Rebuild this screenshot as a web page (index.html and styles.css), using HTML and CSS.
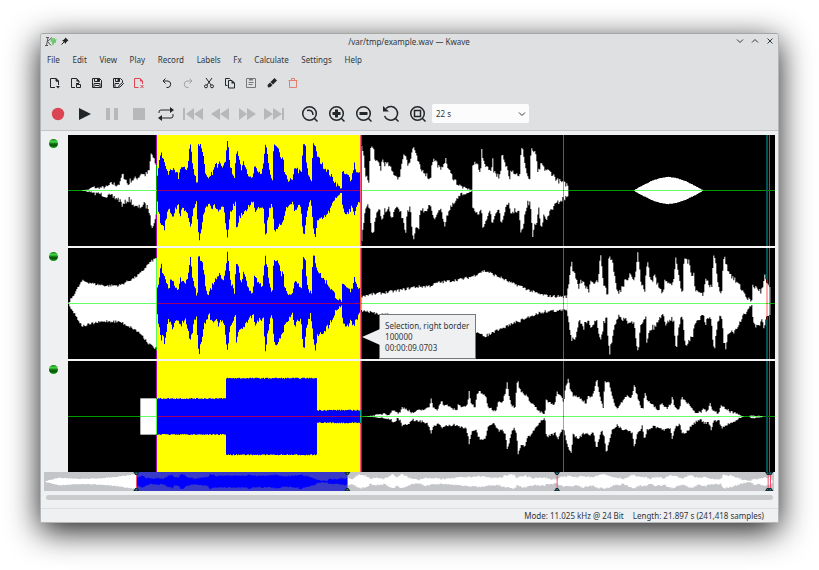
FILE: index.html
```html
<!DOCTYPE html>
<html lang="en">
<head>
    <meta charset="UTF-8">
    <meta name="viewport" content="width=device-width, initial-scale=1.0">
    <title>/var/tmp/example.wav — Kwave</title>
    <link rel="stylesheet" href="styles.css">
</head>
<body>

    <main class="window">
        <header class="header">
            <div class="titlebar">
                <div class="title-left">
                    <svg class="app-icon" width="13" height="11" viewBox="0 0 13 11">
                        <path d="M2 1.500h3M1 9.500h3M4 1.500L2.500 9.500M8 1.500L3.500 5.500L7 9.500" fill="none" stroke="#555" stroke-width="1"/>
                        <path d="M7 6l1-4 1 7 1-7 1 5 1-4" fill="none" stroke="#5fc95f" stroke-width="1"/>
                    </svg>
                    <svg width="8" height="8" viewBox="0 0 8 8">
                        <path d="M4.500 0.500L7.500 3.500L6.500 4L5 5.500V7L1 3h1.500L4 1.500z" fill="#222"/>
                        <path d="M3 5L0.500 7.500" stroke="#222"/>
                    </svg>
                </div>
                <h1 class="title">/var/tmp/example.wav — Kwave</h1>
                <div class="title-right">
                    <button class="win-btn" aria-label="Minimize"><svg width="8" height="8" viewBox="0 0 8 8"><path d="M1 2.500l3 3 3-3"/></svg></button>
                    <button class="win-btn" aria-label="Maximize"><svg width="8" height="8" viewBox="0 0 8 8"><path d="M1 5.500l3-3 3 3"/></svg></button>
                    <button class="win-btn" aria-label="Close"><svg width="8" height="8" viewBox="0 0 8 8"><path d="M1.500 1.500l5 5M6.500 1.500l-5 5"/></svg></button>
                </div>
            </div>

            <nav class="menubar">
                <button>File</button>
                <button>Edit</button>
                <button>View</button>
                <button>Play</button>
                <button>Record</button>
                <button>Labels</button>
                <button>Fx</button>
                <button>Calculate</button>
                <button>Settings</button>
                <button>Help</button>
            </nav>

            <div class="toolbar files">
                <button aria-label="New"><svg viewBox="0 0 12 12"><path d="M6 10.500H1.500v-9H7L9.500 4v4M7 1.500V4H9.500"/><path class="solid" d="M7 1v3.500H10zM7 9h4l-2 2.500z"/></svg></button>
                <button aria-label="Open"><svg viewBox="0 0 12 12"><path d="M5 10.500H1.500v-9H6.500L9 4v2M6.500 7.500h4v3h-4z"/><path class="solid" d="M6.500 1v3.500H9.500zM6 6h3v1.500H6z"/></svg></button>
                <button aria-label="Save"><svg viewBox="0 0 12 12"><path d="M1.500 1.500h7l2 2v7h-9zM3.500 1.500v3h5v-3M3 10.500v-4h6v4M4 8.500h4"/><path class="solid" d="M6 2h2v2H6z"/></svg></button>
                <button aria-label="Save As"><svg viewBox="0 0 12 12"><path d="M6 10.500H1.500v-9h7l2 2v2M3.500 1.500v3h4v-3M3 10.500v-4h4M6.500 10.500l.5-2 3.500-3 1 1-3.500 3.500z"/><path class="solid" d="M5.500 2h2v2h-2z"/></svg></button>
                <button class="red" aria-label="Close File"><svg viewBox="0 0 12 12"><path d="M5.500 10.500H1.500v-9H7L9.500 4v3M7.500 8l3 3M10.500 8l-3 3"/><path class="solid" d="M7 1v3.500H10z"/></svg></button>
                <span class="sep"></span>
                <button aria-label="Undo"><svg viewBox="0 0 12 12"><path d="M4.500 1.500L2 4l2.500 2.500M2 4h5a3.300 3.300 0 0 1 0 6.500H5.500"/></svg></button>
                <button class="dim" aria-label="Redo"><svg viewBox="0 0 12 12"><path d="M7.500 1.500L10 4 7.500 6.500M10 4H5a3.300 3.300 0 0 0 0 6.500h1.500"/></svg></button>
                <button aria-label="Cut"><svg viewBox="0 0 12 12"><path d="M3 1l5 7M9 1L4 8"/><circle cx="3" cy="9.300" r="1.500"/><circle cx="9" cy="9.300" r="1.500"/></svg></button>
                <button aria-label="Copy"><svg viewBox="0 0 12 12"><path d="M3.500 8.500h-2v-7h4l1 1M4.500 3.500h3.500l2.500 2.500v5h-6z"/><path class="solid" d="M7.500 3v3.500H11z"/></svg></button>
                <button class="mid" aria-label="Paste"><svg viewBox="0 0 12 12"><path d="M1.500 1.500h9v9h-9zM3.500 5.500h5M3.500 7.500h4"/><path class="solid" d="M4 1h4v2.500H4z"/></svg></button>
                <button aria-label="Erase"><svg viewBox="0 0 12 12"><path class="solid" d="M8.500 1L11 3.500 7 7.500 4.500 5zM4 5.500L6.500 8 4.500 10 2 10.500 1.500 8z"/></svg></button>
                <button class="orange" aria-label="Delete"><svg viewBox="0 0 12 12"><path d="M1.500 3.500h9M2.500 3.500v7h7v-7M4.500 3V1.500h3V3"/></svg></button>
            </div>

            <div class="toolbar player">
                <button class="rec" aria-label="Record"><svg viewBox="0 0 18 18"><circle class="solid" cx="9" cy="9" r="6.200"/></svg></button>
                <button aria-label="Play"><svg viewBox="0 0 18 18"><path class="solid" d="M3 3l12 6-12 6z"/></svg></button>
                <button class="off" aria-label="Pause"><svg viewBox="0 0 18 18"><path class="solid" d="M3 3h4v12H3zM11 3h4v12h-4z"/></svg></button>
                <button class="off" aria-label="Stop"><svg viewBox="0 0 18 18"><path class="solid" d="M3 3h12v12H3z"/></svg></button>
                <button aria-label="Loop"><svg viewBox="0 0 18 18"><path d="M2 8V7q0-2 2-2h10M16 9v2q0 2-2 2H3"/><path class="solid" d="M13 2l4 3-4 3zM5 10l-4 3 4 3z"/></svg></button>
                <button class="off" aria-label="Skip to Start"><svg viewBox="0 0 20 18"><path class="solid" d="M0 3h2v12H0zM11 3v12L3 9zM20 3v12l-9-6z"/></svg></button>
                <button class="off" aria-label="Rewind"><svg viewBox="0 0 18 18"><path class="solid" d="M9 3v12L0 9zM18 3v12L9 9z"/></svg></button>
                <button class="off" aria-label="Forward"><svg viewBox="0 0 18 18"><path class="solid" d="M1 3v12l8-6zM9 3v12l9-6z"/></svg></button>
                <button class="off" aria-label="Skip to End"><svg viewBox="0 0 20 18"><path class="solid" d="M0 3v12l9-6zM9 3v12l9-6zM18 3h2v12h-2z"/></svg></button>
                <span class="sep"></span>
                <button class="zoom" aria-label="Zoom to Selection"><svg viewBox="0 0 18 18"><circle cx="8.500" cy="8.500" r="6.800"/><path d="M13 13l3.500 3.500M6 5.500q6-1 6 4.500"/></svg></button>
                <button class="zoom" aria-label="Zoom In"><svg viewBox="0 0 18 18"><circle cx="8.500" cy="8.500" r="6.800"/><path d="M13 13l3.500 3.500"/><path class="bold" d="M4.500 8.500h8M8.500 4.500v8"/></svg></button>
                <button class="zoom" aria-label="Zoom Out"><svg viewBox="0 0 18 18"><circle cx="8.500" cy="8.500" r="6.800"/><path d="M13 13l3.500 3.500"/><path class="bold" d="M4.500 8.500h8"/></svg></button>
                <button class="zoom" aria-label="Zoom 1:1"><svg viewBox="0 0 18 18"><path d="M4 3.500A6.800 6.800 0 1 1 2.500 11M13 13l3.500 3.500"/><path class="solid" d="M1 1l6 5.500H1z"/></svg></button>
                <button class="zoom" aria-label="Zoom All"><svg viewBox="0 0 18 18"><circle cx="8.500" cy="8.500" r="6.800"/><path d="M13 13l3.500 3.500M5.500 5.500h6v6h-6z"/></svg></button>
                <div class="combo">
                    <select aria-label="Zoom factor">
                        <option>22 s</option>
                    </select>
                    <svg class="chevron" width="8" height="8" viewBox="0 0 8 8"><path d="M1 2.500l3 3 3-3"/></svg>
                </div>
            </div>
        </header>

        <section class="signal">
            <div class="channels">
                <div class="channel"><button class="led" aria-label="Channel 0"></button></div>
                <div class="channel"><button class="led" aria-label="Channel 1"></button></div>
                <div class="channel"><button class="led" aria-label="Channel 2"></button></div>
            </div>
            <div class="tracks">
                <svg class="track" id="track0" viewBox="0 0 2121 333" preserveAspectRatio="none"></svg>
                <svg class="track" id="track1" viewBox="0 0 2121 333" preserveAspectRatio="none"></svg>
                <svg class="track" id="track2" viewBox="0 0 2121 333" preserveAspectRatio="none"></svg>
                <div class="tip">
                    <p>Selection, right border</p>
                    <p>100000</p>
                    <p>00:00:09.0703</p>
                </div>
            </div>
        </section>

        <svg class="overview" id="overview" viewBox="0 0 2190 57" preserveAspectRatio="none"></svg>
        <div class="scrollbar"></div>

        <footer class="status">
            <span>Mode: 11.025 kHz @ 24 Bit</span>
            <span>Length: 21.897 s (241,418 samples)</span>
        </footer>
    </main>

    <script src="script.js"></script>
</body>
</html>
```
FILE: styles.css
```css
body {
    margin: 0;
    padding: 33px 40px 48px;
    background: #fff;
    color: #31363b;
    font-family: "Noto Sans", sans-serif;
    font-size: 8px;
    line-height: 11px;
}
button {
    border: none;
    padding: 0;
    background: none;
    color: inherit;
    font: inherit;
}
svg {
    display: block;
}
.window {
    background: #eff0f1;
    border: 1px solid #b4b6b8;
    border-top-color: #a4a8a6;
    border-radius: 3px 3px 0 0;
    box-shadow: 0 8px 32px rgba(0, 0, 0, 0.9);
}
.header {
    background: #dee0e2;
    border-bottom: 1px solid #c3c5c7;
    border-radius: 2px 2px 0 0;
}

/* title bar and menu */
.titlebar {
    display: flex;
    align-items: center;
    height: 14px;
    padding: 0 4px 2px 3px;
}
.title-left,
.title-right {
    display: flex;
    flex: 1;
    align-items: center;
    gap: 4px;
}
.title-right {
    justify-content: flex-end;
    gap: 7px;
}
.title {
    margin: 0;
    font-size: 8px;
    font-weight: normal;
}
.win-btn svg,
.chevron {
    fill: none;
    stroke: #31363b;
}
.menubar {
    display: flex;
    align-items: center;
    justify-content: space-between;
    max-width: 327px;
    height: 18px;
    padding-bottom: 2px;
}
.menubar button {
    padding: 0 6px;
}

/* toolbars */
.toolbar {
    display: flex;
    align-items: center;
    padding-left: 3px;
}
.toolbar button {
    display: flex;
    justify-content: center;
    color: #232629;
}
.toolbar svg {
    fill: none;
    stroke: currentColor;
}
.toolbar .solid {
    fill: currentColor;
    stroke: none;
}
.files {
    height: 25px;
}
.files button {
    width: 21px;
}
.files button svg {
    width: 12px;
    height: 12px;
}
.files .sep {
    width: 7px;
}
.player {
    height: 33px;
    padding-top: 2px;
}
.player button {
    width: 27px;
}
.player button svg {
    height: 18px;
}
.player .sep {
    width: 9px;
}
.toolbar .red {
    color: #da4453;
}
.toolbar .rec {
    color: #da4453;
}
.toolbar .orange {
    color: #e58070;
}
.toolbar .dim {
    color: #a0a2a4;
}
.toolbar .mid {
    color: #76787a;
}
.toolbar .off {
    color: #b6b8ba;
}
.zoom svg {
    stroke-width: 1.5;
}
.zoom .bold {
    stroke-width: 3;
}
.combo {
    display: flex;
    align-items: center;
    position: relative;
    width: 97px;
    height: 19px;
    margin-left: 1px;
}
.combo select {
    width: 100%;
    height: 100%;
    padding: 0 4px;
    border: none;
    border-radius: 2px;
    appearance: none;
    background: #fcfcfc;
    color: #31363b;
    font: inherit;
}
.toolbar .chevron {
    position: absolute;
    right: 3px;
    pointer-events: none;
}

/* signal view */
.signal {
    display: flex;
    padding: 4px 3px 0 0;
}
.channels,
.tracks {
    display: flex;
    flex-direction: column;
    gap: 2px;
}
.channels {
    width: 27px;
}
.channel {
    display: flex;
    justify-content: center;
    height: 111px;
    padding: 4px 3px 0 0;
    box-sizing: border-box;
}
.led {
    width: 9px;
    height: 9px;
    border-radius: 50%;
    background: linear-gradient(#0a7a0a, #45d845 30%, #0a6a0a 55%, #075007 70%, #12a812);
}
.tracks {
    flex: 1;
    position: relative;
    background: #f4f4f4;
}
.track {
    width: 100%;
    height: 111px;
    background: #000;
    isolation: isolate;
}
.marker {
    mix-blend-mode: difference;
}
.tip {
    position: absolute;
    left: 44%;
    top: 179px;
    padding: 5px 6px 5px 5px;
    border: 1px solid #76797c;
    background: #eff0f1;
    white-space: nowrap;
}
.tip::before {
    content: "";
    position: absolute;
    right: 100%;
    top: 14px;
    width: 18px;
    height: 16px;
    background: #eff0f1;
    clip-path: polygon(0 50%, 100% 0, 100% 100%);
}
.tip p {
    margin: 0;
}
.overview {
    width: calc(100% - 7px);
    height: 19px;
    margin: 0 4px 0 3px;
    background: #c3c5c9;
}
.scrollbar {
    height: 5px;
    margin: 4px 5px 0;
    border-radius: 3px;
    background: #c9cbcc;
}
.status {
    display: flex;
    justify-content: flex-end;
    gap: 9px;
    margin-top: 8px;
    padding: 1px 14px 1px 0;
    border-top: 1px solid #dcdee0;
}
```
FILE: script.js
```js
// envelopes are flat lists: x, amplitude, x, amplitude, ...
const voiceUp = [0,48,4,68,8,103,12,118,16,93,23,80,28,58,34,48,40,68,46,63,52,53,60,48,65,33,67,70,73,70,83,63,91,70,95,118,99,138,103,108,106,68,110,53,116,33,120,28,122,138,128,138,134,126,140,88,146,43,153,30,158,38,164,53,170,60,172,76,180,76,186,94,192,80,198,73,203,78,206,118,210,153,214,118,218,73,224,53,231,33,234,83,239,130,243,108,248,73,254,63,258,88,263,78,268,58,274,48,281,36,288,43,291,78,298,68,306,58,314,53,320,88,323,143,328,118,333,78,338,48,346,30,348,118,351,138,358,128,364,123,370,88,378,93,382,43,393,33,406,28,412,68,415,73,423,58,432,53,436,118,439,148,444,128,448,68,456,38,463,28,466,140,471,140,478,108,488,88,498,73,508,63,518,48,528,33,538,18,546,10,554,8,555,53,563,48,573,43,580,33,586,53,591,83,595,63,600,53,609,48];
const voiceDown = [0,37,6,77,11,107,16,97,21,114,28,72,33,52,40,62,46,77,53,57,63,47,68,72,76,57,86,52,92,82,98,112,104,92,108,57,118,37,121,122,126,147,132,112,138,72,146,47,156,32,162,52,173,47,183,62,193,54,200,57,205,112,211,144,215,102,220,62,228,47,234,37,237,112,243,92,250,72,260,72,270,52,280,37,288,37,292,62,298,52,308,47,318,47,322,112,325,147,330,92,336,57,344,32,350,112,358,124,366,107,376,92,384,57,394,47,406,32,412,67,420,47,430,47,436,112,440,144,445,92,451,52,460,32,468,112,474,137,480,92,493,87,500,82,513,67,523,47,533,27,543,12,553,5,556,57,563,67,573,62,583,52,590,72,596,47,609,32];

const intro = {
    up: [41,1,63,3,66,7,76,10,86,7,116,11,131,21,141,17,156,21,159,46,166,43,173,31,178,16,186,31,196,33,211,41,219,53,228,46,236,51,244,61,246,111,250,111,254,96,261,81,266,61],
    down: [41,1,66,4,76,11,86,7,106,14,131,19,146,24,156,31,163,47,171,34,181,27,186,29,201,51,216,49,226,41,241,54,246,89,250,109,256,94,266,64]
};
const afterSelection = {
    up: [880,130,884,121,887,90,891,41,901,31,906,121,908,133,916,121,921,86,931,81,938,61,941,96,948,81,961,76,971,56,986,41,996,36,998,81,1006,106,1013,106,1018,81,1026,86,1031,121,1036,131,1042,106,1051,81,1058,58,1065,60,1076,45,1086,31,1091,91,1101,91,1111,71,1118,56,1124,81,1131,93,1138,71,1146,51,1156,36,1171,16,1186,8,1210,2,1212,76,1226,81,1236,56,1240,119,1246,81,1261,69,1268,51,1273,101,1276,61,1286,46,1296,41,1301,113,1308,81,1316,69,1325,36,1327,66,1341,51,1354,46,1358,121,1361,126,1366,106,1372,66,1378,41,1384,33,1388,121,1394,121,1404,101,1406,61,1414,56,1418,86,1426,66,1436,61,1451,51,1466,31,1486,21,1500,16],
    down: [880,150,886,99,891,59,898,44,906,69,908,129,916,119,926,59,934,64,941,99,948,59,961,54,971,89,978,59,991,54,1001,79,1006,104,1012,124,1016,59,1026,54,1031,129,1036,149,1042,119,1051,109,1056,59,1071,59,1086,44,1094,84,1101,81,1111,54,1121,69,1129,104,1134,79,1146,54,1161,34,1176,14,1210,2,1213,54,1221,74,1231,69,1239,64,1243,109,1251,89,1264,59,1271,104,1281,69,1291,54,1301,109,1308,59,1321,44,1328,69,1341,59,1352,64,1356,124,1362,124,1368,84,1376,39,1386,37,1392,139,1398,104,1406,99,1410,44,1418,109,1426,79,1436,89,1446,59,1461,44,1476,29,1500,19]
};
const lens = [1695,0,1720,14,1750,29,1775,37,1800,41,1825,37,1850,29,1880,14,1905,0];
const swell = [1,2,41,68,66,62,81,58,116,53,156,55,176,66,196,76,216,90,231,108,241,120,251,128,266,138];
const hill = [878,22,906,27,946,32,996,40,1036,49,1086,53,1106,62,1146,68,1186,74,1216,83,1231,92,1246,98,1261,94,1276,86,1301,76,1326,62,1356,52,1386,38,1416,27,1446,22,1498,21];
const steps = [267,54,471,54,472,115,744,115,745,19,878,19];
const fading = {
    up: [881,0,906,2,936,6,946,10,961,7,971,15,977,22,984,12,996,10,999,27,1011,25,1021,18,1031,10,1041,15,1061,20,1081,25,1088,52,1094,30,1108,20,1114,35,1119,52,1126,30,1138,35,1146,25,1166,20,1169,35,1181,30,1196,32,1202,73,1208,40,1221,25,1224,60,1231,77,1241,70,1254,55,1258,30,1281,15,1291,50,1301,40,1311,75,1316,105,1321,70,1328,35,1341,25,1344,95,1348,108,1354,80,1371,65,1386,45,1396,35,1411,15,1429,7,1433,48,1446,40,1458,32,1466,75,1474,65,1486,45,1492,90,1499,112,1506,80,1516,60,1531,60,1546,45,1554,40,1558,62,1571,60,1578,80,1584,112,1588,100,1594,60,1604,25,1609,105,1621,105,1631,60,1644,22,1656,40,1674,62,1686,55,1693,70,1698,95,1704,70,1716,30,1724,25,1729,75,1736,50,1751,35,1771,20,1778,40,1796,25,1808,40,1812,67,1818,30,1834,20,1838,55,1846,55,1861,35,1876,15,1896,12,1904,20,1916,15,1926,40,1934,15,1951,10,1956,32,1976,20,1996,10,2021,2,2026,0,2044,0,2046,4,2066,2,2084,1],
    down: [881,0,906,1,936,4,966,8,976,17,986,8,996,10,1001,30,1011,25,1021,20,1031,10,1061,15,1081,25,1088,50,1096,30,1111,20,1121,38,1136,25,1156,25,1176,30,1194,35,1202,80,1211,45,1224,35,1228,60,1238,72,1251,65,1258,30,1276,20,1291,45,1301,35,1311,55,1317,102,1326,60,1336,30,1344,55,1349,110,1358,85,1368,92,1376,65,1391,50,1411,20,1429,3,1434,62,1446,55,1461,50,1468,70,1476,45,1486,40,1494,75,1501,102,1508,110,1514,55,1531,65,1546,50,1561,55,1576,50,1584,95,1591,70,1601,40,1609,70,1614,115,1621,80,1631,40,1646,25,1661,40,1676,40,1691,50,1698,92,1706,55,1721,30,1728,70,1736,40,1756,30,1781,40,1806,35,1812,70,1818,35,1834,20,1841,50,1856,45,1876,20,1896,10,1904,18,1921,20,1928,40,1936,15,1951,10,1959,35,1976,25,2006,10,2021,2,2026,0,2044,0,2046,4,2066,4,2084,1]
};
const overviewSel = [278,12,293,18,303,12,318,8,333,10,358,8,373,18,383,20,390,12,403,12,408,22,418,20,428,12,448,8,478,12,493,15,495,22,518,17,558,18,608,18,613,22,628,17,678,18,698,20,718,16,758,18,768,22,778,18,798,14,828,3,848,3,853,8,878,7,888,10,910,9];
const overviewLeft = [3,1,43,11,98,8,158,9,218,14,258,20,278,22];
const overviewRight = [910,10,923,8,943,20,963,18,978,8,993,12,1018,8,1033,15,1046,22,1058,12,1073,22,1088,14,1103,8,1123,6,1143,12,1163,9,1208,8,1248,12,1288,15,1318,15,1338,11,1368,12,1383,18,1408,20,1418,12,1438,18,1468,10,1498,12,1518,8,1538,6,1553,14,1578,16,1598,12,1613,18,1628,14,1648,14,1663,20,1688,20,1708,12,1738,8,1768,20,1788,12,1803,14,1818,8,1838,14,1858,10,1883,20,1898,14,1918,10,1938,20,1963,10,1983,14,1998,8,2031,8,2036,20,2058,18,2088,8,2108,2,2120,2,2124,8,2148,8,2158,12,2178,12,2184,1];

let seed = 7;
function random() {
    seed = (seed * 16807) % 2147483647;
    return seed / 2147483647 - 0.5;
}

// one flat column every 3 units, with a little grain on the edge
function edge(env, mid, sign, offset, grain) {
    const points = [];
    let i = 0;
    for (let x = env[0]; x < env[env.length - 2]; x += 3) {
        while (i < env.length - 4 && env[i + 2] < x) {
            i += 2;
        }
        const t = Math.min(1, (x - env[i]) / (env[i + 2] - env[i]));
        let amp = env[i + 1] + (env[i + 3] - env[i + 1]) * t;
        amp += random() * Math.min(amp, grain);
        const y = (mid + sign * amp).toFixed(1);
        points.push((x + offset) + "," + y, (x + offset + 3) + "," + y);
    }
    return points;
}

function wave(up, down, mid, fill, offset = 0, grain = 16) {
    const points = edge(up, mid, -1, offset, grain).concat(edge(down, mid, 1, offset, grain).reverse());
    return `<polygon points="${points.join(" ")}" fill="${fill}"/>`;
}

function rect(x, y, w, h, fill, cls = "") {
    return `<rect x="${x}" y="${y}" width="${w}" height="${h}" fill="${fill}" class="${cls}"/>`;
}

function drawTrack(id, shapes) {
    let out = rect(267, 0, 612, 333, "#ff0") + shapes;
    out += rect(0, 165, 267, 3, "rgba(0,255,0,.6)") + rect(879, 165, 1242, 3, "rgba(0,255,0,.6)");
    out += rect(267, 165, 612, 3, "rgba(255,0,0,.6)");
    out += rect(264, 0, 3, 333, "#a0a", "marker");
    out += rect(876, 0, 3, 333, "#00aa78", "marker") + rect(879, 0, 3, 333, "#640", "marker");
    out += rect(1485, 0, 3, 333, "#008484", "marker");
    out += rect(2094, 0, 6, 333, "#005454", "marker") + rect(2103, 0, 3, 333, "#008484", "marker");
    document.getElementById(id).innerHTML = out;
}

const mid = 166.5;
const white = "#fff";
const blue = "#00f";

drawTrack("track0",
    wave(intro.up, intro.down, mid, white) +
    wave(voiceUp, voiceDown, mid, blue, 267) +
    wave(afterSelection.up, afterSelection.down, mid, white) +
    wave(lens, lens, mid, white, 0, 1));

drawTrack("track1",
    wave(swell, swell, mid, white, 0, 8) +
    wave(voiceUp, voiceDown, mid, blue, 267) +
    wave(hill, hill, mid, white, 0, 9) +
    wave(voiceUp, voiceDown, mid, white, 1498));

drawTrack("track2",
    rect(217, 112, 50, 109, white) +
    wave(steps, steps, mid, blue, 0, 3) +
    wave(fading.up, fading.down, mid, white, 0, 8));

let over = rect(278, 0, 632, 57, "#3a3ac8");
over += wave(overviewLeft, overviewLeft, 28.5, white, 0, 2);
over += wave(overviewSel, overviewSel, 28.5, blue, 0, 4);
over += wave(overviewRight, overviewRight, 28.5, white, 0, 5);
[277, 910, 1539, 2172, 2179].forEach((x) => {
    over += rect(x - 1, 6, 3, 45, "#f0506e");
    over += `<path d="M${x - 9} 0h18l-6 9h-6zM${x - 9} 57h18l-6-9h-6z" fill="#10262a"/>`;
    over += `<path d="M${x - 4} 2h8l-4 5zM${x - 4} 55h8l-4-5z" fill="#2a9aa0"/>`;
});
document.getElementById("overview").innerHTML = over;
```
